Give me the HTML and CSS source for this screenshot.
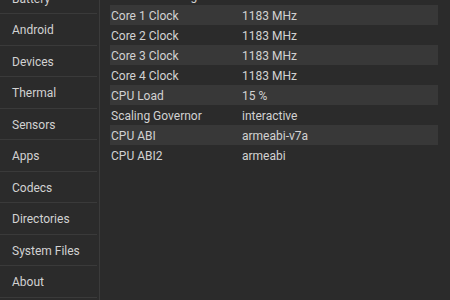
FILE: index.html
```html
<!DOCTYPE html>
<html lang="en">
<head>
  <meta charset="UTF-8" />
  <meta name="viewport" content="width=device-width, initial-scale=1.0"/>
  <title>CPU Info</title>
  <link rel="stylesheet" href="styles.css">
</head>
<body>

  <!-- Menu links -->
  <nav class="sidebar">
    <ul class="menu">
      <li>Battery</li>
      <li>Android</li>
      <li>Devices</li>
      <li>Thermal</li>
      <li>Sensors</li>
      <li>Apps</li>
      <li>Codecs</li>
      <li>Directories</li>
      <li>System Files</li>
      <li>About</li>
    </ul>
  </nav>

  <main class="content">
    <div class="info-list">
      <div class="info-row"><span class="label">CPU Clock Range</span><span class="value">312 - 1183 MHz</span></div>
      <div class="info-row alt"><span class="label">Core 1 Clock</span><span class="value">1183 MHz</span></div>
      <div class="info-row"><span class="label">Core 2 Clock</span><span class="value">1183 MHz</span></div>
      <div class="info-row alt"><span class="label">Core 3 Clock</span><span class="value">1183 MHz</span></div>
      <div class="info-row"><span class="label">Core 4 Clock</span><span class="value">1183 MHz</span></div>
      <div class="info-row alt"><span class="label">CPU Load</span><span class="value">15 %</span></div>
      <div class="info-row"><span class="label">Scaling Governor</span><span class="value">interactive</span></div>
      <div class="info-row alt"><span class="label">CPU ABI</span><span class="value">armeabi-v7a</span></div>
      <div class="info-row"><span class="label">CPU ABI2</span><span class="value">armeabi</span></div>
    </div>
  </main>

</body>
</html>
```

FILE: styles.css
```css
* {
  margin: 0;
  padding: 0;
  box-sizing: border-box;
}

body {
  font-family: Roboto, "Liberation Sans", sans-serif;
  font-size: 12px;
  background-color: #2b2b2b;
  color: #d2d2d2;
  display: flex;
  height: 100vh;
  overflow: hidden;
}

.sidebar {
  width: 100px;
  flex-shrink: 0;
  border-right: 1px solid #3b3b3b;
}

.menu {
  list-style: none;
  margin-top: -17.5px;
  margin-right: 2px;
}

.menu li {
  height: 31.5px;
  line-height: 30.5px;
  padding: 1px 0 0 12px;
  border-bottom: 1px solid #3a3a3a;
}

.content {
  flex: 1;
  padding: 0 12px 0 10px;
}

.info-list {
  margin-top: -15px;
}

.info-row {
  display: flex;
  height: 20px;
  line-height: 20px;
  padding: 1px 0 0 1px;
}

.info-row.alt {
  background-color: #383838;
}

.info-row .label {
  width: 131px;
}
```
